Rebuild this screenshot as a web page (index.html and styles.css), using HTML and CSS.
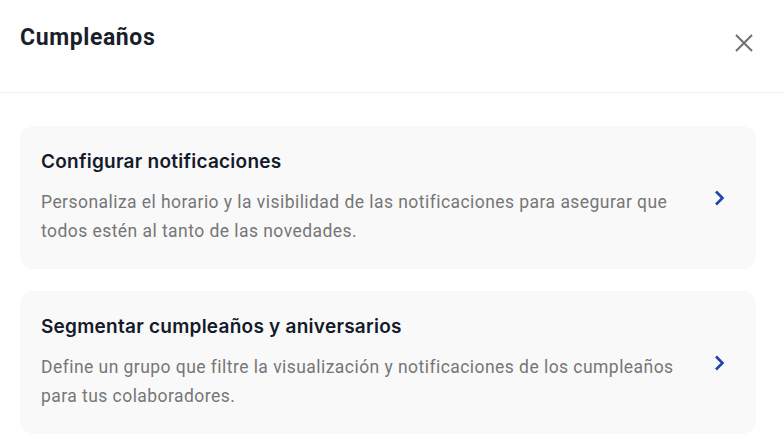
FILE: index.html
```html
<!DOCTYPE html>
<html lang="es">
<head>
	<meta charset="utf-8">
	<title>Cumpleaños</title>
	<link rel="stylesheet" href="styles.css">
</head>
<body>
	<div class="modal">
		<div class="modal-header">
			<h2 class="modal-title">Cumpleaños</h2>
			<button class="close-btn" type="button" aria-label="Cerrar">
				<svg width="18" height="18" viewBox="0 0 18 18"><path d="M1 1L17 17M17 1L1 17" stroke="#707070" stroke-width="2" fill="none"/></svg>
			</button>
		</div>
		<div class="modal-body">
			<div class="option-card">
				<div class="option-text">
					<h3 class="option-title">Configurar notificaciones</h3>
					<p class="option-desc">Personaliza el horario y la visibilidad de las notificaciones para asegurar que todos estén al tanto de las novedades.</p>
				</div>
				<svg class="chevron" width="11" height="16" viewBox="0 0 11 16"><path d="M2 1.5L8.5 8L2 14.5" stroke="#1e45a8" stroke-width="2.6" fill="none"/></svg>
			</div>
			<div class="option-card">
				<div class="option-text">
					<h3 class="option-title">Segmentar cumpleaños y aniversarios</h3>
					<p class="option-desc">Define un grupo que filtre la visualización y notificaciones de los cumpleaños para tus colaboradores.</p>
				</div>
				<svg class="chevron" width="11" height="16" viewBox="0 0 11 16"><path d="M2 1.5L8.5 8L2 14.5" stroke="#1e45a8" stroke-width="2.6" fill="none"/></svg>
			</div>
		</div>
	</div>
</body>
</html>
```
FILE: styles.css
```css
body {
	margin: 0;
	background: #fff;
	font-family: Roboto, "Liberation Sans", sans-serif;
}
.modal-header {
	display: flex;
	justify-content: space-between;
	align-items: flex-start;
	height: 92px;
	padding: 0 20px;
	border-bottom: 1px solid #efefef;
}
.modal-title {
	margin: 24px 0 0;
	font-size: 23px;
	font-weight: 700;
	color: #1a1f2b;
	letter-spacing: 0.6px;
}
.modal-body {
	display: flex;
	flex-direction: column;
	gap: 22px;
	padding: 33px 28px 0 20px;
}
.close-btn {
	margin: 34px 11px 0 0;
	padding: 0;
	border: none;
	background: none;
	width: 18px;
	height: 18px;
}
.option-card {
	display: flex;
	align-items: center;
	gap: 30px;
	background: #f9f9f9;
	border-radius: 14px;
	padding: 24px 31px 23px 21px;
}
.option-text {
	flex: 1;
}
.option-title {
	margin: 0 0 14px;
	font-family: Inter, "Noto Sans", sans-serif;
	font-size: 19px;
	font-weight: 600;
	color: #141a29;
	line-height: 24px;
	letter-spacing: 0.25px;
}
.option-desc {
	margin: 0;
	font-size: 17.5px;
	line-height: 29px;
	color: #767676;
	letter-spacing: 0.45px;
}
.chevron {
	flex: none;
}
```
